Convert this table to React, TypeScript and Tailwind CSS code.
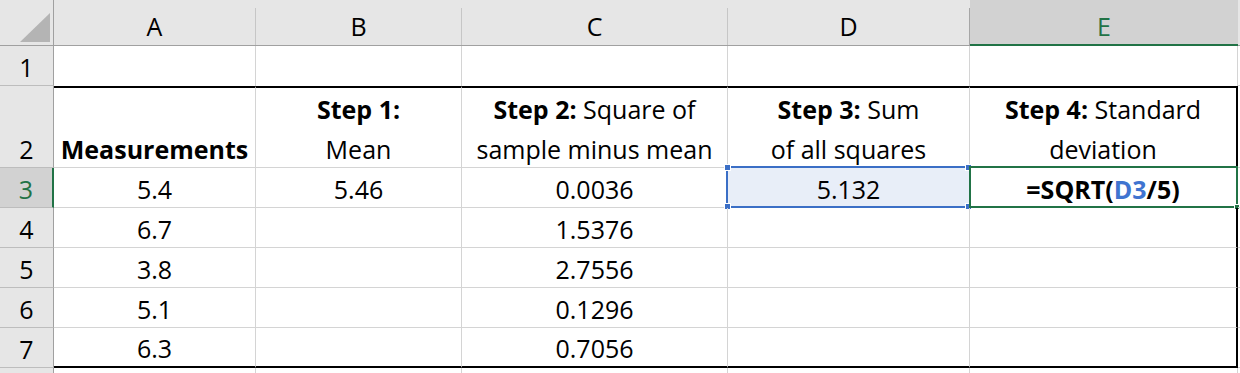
import React from 'react';

const font = "font-['Open_Sans','Noto_Sans',sans-serif]";

const letters = ['A', 'B', 'C', 'D', 'E'];

// values for rows 4-7 (A, B, C, D, E)
const lowerRows: { n: number; cells: string[] }[] = [
  { n: 4, cells: ['6.7', '', '1.5376', '', ''] },
  { n: 5, cells: ['3.8', '', '2.7556', '', ''] },
  { n: 6, cells: ['5.1', '', '0.1296', '', ''] },
  { n: 7, cells: ['6.3', '', '0.7056', '', ''] },
];

function cellClass(row: number, col: number) {
  const inBox = row >= 2 && row <= 7;
  const right =
    col === 4 && inBox ? 'border-r-2 border-r-black' : col === 5 ? '' : 'border-r border-r-[#d4d4d4]';
  let bottom = 'border-b border-b-[#d4d4d4]';
  if (row === 7 && col < 5) bottom = 'border-b-2 border-b-black';
  if (row === 1 && col < 5) bottom = '';
  const top = row === 2 && col < 5 ? 'border-t-2 border-t-black' : '';
  return `relative flex items-end justify-center text-center whitespace-nowrap leading-[36px] ${right} ${bottom} ${top}`;
}

function RowHeader({ n, active }: { n: number; active?: boolean }) {
  return (
    <div
      className={
        active
          ? 'flex items-end justify-center leading-[36px] bg-[#d2d2d2] text-[#217346] border-r-2 border-r-[#217346] border-b border-b-[#bdbdbd]'
          : 'flex items-end justify-center leading-[36px] bg-[#e6e6e6] text-black border-r border-r-[#a0a0a0] border-b border-b-[#bdbdbd]'
      }
    >
      {n > 0 ? n : ''}
    </div>
  );
}

function StepHead({ step, rest, line2 }: { step: string; rest: string; line2: string }) {
  return (
    <div className="leading-[40px] -mb-[2px]">
      <div>
        <span className="font-bold">{step}</span>
        {rest}
      </div>
      <div>{line2}</div>
    </div>
  );
}

export default function App() {
  return (
    <div className={`w-[1240px] h-[373px] overflow-hidden bg-white text-black text-[25px] ${font}`}>
      <div className="grid grid-cols-[54px_202px_206px_266px_242px_268px_1fr] grid-rows-[46px_40px_82px_40px_40px_40px_40px_40px_40px]">
        {/* column headers */}
        <div className="bg-[#e6e6e6] border-r border-r-[#a0a0a0] border-b border-b-[#a0a0a0] flex items-start justify-start">
          <svg width="53" height="45" viewBox="0 0 53 45">
            <polygon points="50,13 50,42 20,42" fill="#b4b4b4" />
          </svg>
        </div>
        {letters.map((l) =>
          l === 'E' ? (
            <div
              key={l}
              className="bg-[#d2d2d2] text-[#217346] border-b-2 border-b-[#217346] flex items-end justify-center pb-[2px] leading-[32px]"
            >
              {l}
            </div>
          ) : (
            <div key={l} className="bg-[#e6e6e6] border-b border-b-[#a0a0a0] flex flex-col">
              <div
                className={
                  l === 'D'
                    ? 'flex-1 mt-2 border-r border-r-[#a6a6a6] flex items-end justify-center pb-[3px] leading-[32px]'
                    : 'flex-1 mt-2 border-r border-r-[#c6c6c6] flex items-end justify-center pb-[3px] leading-[32px]'
                }
              >
                {l}
              </div>
            </div>
          ),
        )}
        <div className="bg-[#e6e6e6] border-b border-b-[#a0a0a0]" />

        {/* row 1 */}
        <RowHeader n={1} />
        {[0, 1, 2, 3, 4, 5].map((c) => (
          <div key={c} className={cellClass(1, c)} />
        ))}

        {/* row 2 */}
        <RowHeader n={2} />
        <div className={`${cellClass(2, 0)} font-bold`}>Measurements</div>
        <div className={cellClass(2, 1)}>
          <StepHead step="Step 1:" rest="" line2="Mean" />
        </div>
        <div className={cellClass(2, 2)}>
          <StepHead step="Step 2:" rest=" Square of" line2="sample minus mean" />
        </div>
        <div className={cellClass(2, 3)}>
          <StepHead step="Step 3:" rest=" Sum" line2="of all squares" />
        </div>
        <div className={cellClass(2, 4)}>
          <StepHead step="Step 4:" rest=" Standard" line2="deviation" />
        </div>
        <div className={cellClass(2, 5)} />

        {/* row 3 */}
        <RowHeader n={3} active />
        <div className={cellClass(3, 0)}>5.4</div>
        <div className={cellClass(3, 1)}>5.46</div>
        <div className={cellClass(3, 2)}>0.0036</div>
        <div className={`${cellClass(3, 3)} bg-[#e8eef8]`}>
          5.132
          {/* reference highlight */}
          <div className="absolute -top-[2px] -left-[2px] -bottom-[1px] right-0 border-2 border-[#3b6fc6] border-r-0 pointer-events-none" />
          <span className="absolute -top-[4px] -left-[4px] w-[7px] h-[7px] bg-[#3b6fc6] border border-white" />
          <span className="absolute -bottom-[3px] -left-[4px] w-[7px] h-[7px] bg-[#3b6fc6] border border-white" />
          <span className="absolute -top-[4px] -right-[3px] w-[7px] h-[7px] bg-[#3b6fc6] border border-white" />
          <span className="absolute -bottom-[3px] -right-[3px] w-[7px] h-[7px] bg-[#3b6fc6] border border-white" />
        </div>
        <div className={`${cellClass(3, 4)} font-bold`}>
          <span>
            =SQRT(<span className="text-[#3f74d0]">D3</span>/5)
          </span>
          {/* active cell */}
          <div className="absolute -top-[2px] -left-[1px] -bottom-[1px] -right-[2px] border-2 border-[#217346] pointer-events-none" />
          <span className="absolute -bottom-[3px] -right-[4px] w-[6px] h-[6px] bg-[#217346] border border-white" />
        </div>
        <div className={cellClass(3, 5)} />

        {/* rows 4-7 */}
        {lowerRows.map((r) => (
          <React.Fragment key={r.n}>
            <RowHeader n={r.n} />
            {r.cells.map((v, c) => (
              <div key={c} className={cellClass(r.n, c)}>
                {v}
              </div>
            ))}
            <div className={cellClass(r.n, 5)} />
          </React.Fragment>
        ))}

        {/* row 8 (cut off) */}
        <RowHeader n={0} />
        {[0, 1, 2, 3, 4, 5].map((c) => (
          <div key={c} className={cellClass(8, c)} />
        ))}
      </div>
    </div>
  );
}
